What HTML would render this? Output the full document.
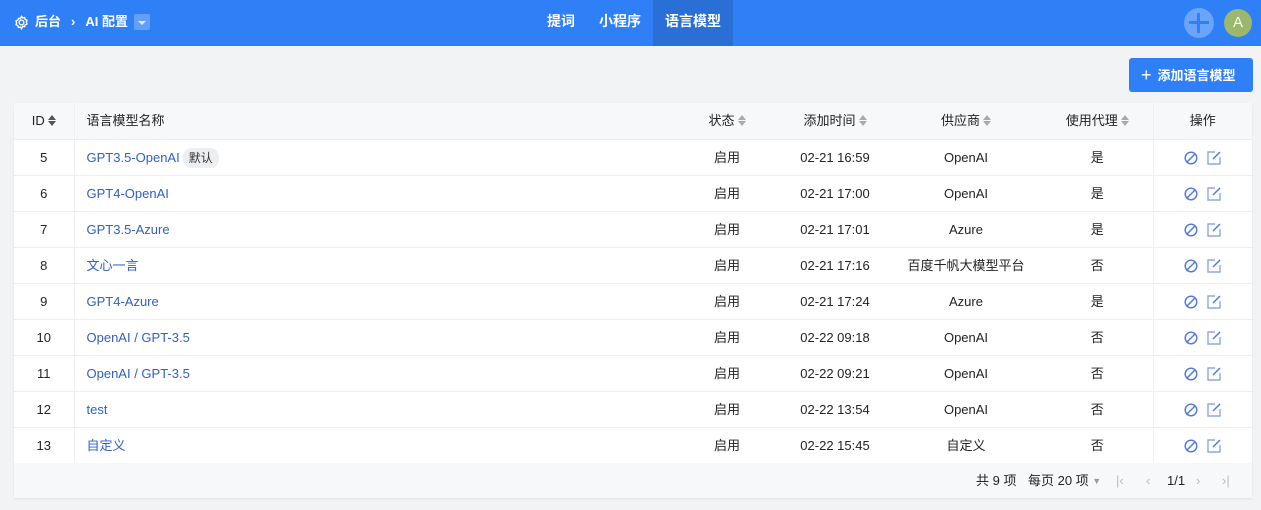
<!DOCTYPE html>
<html><head><meta charset="utf-8"><style>
*{box-sizing:border-box;margin:0;padding:0}
body{width:1261px;height:510px;background:#f2f3f5;font-family:"Liberation Sans","Noto Sans CJK SC",sans-serif;font-size:13px;color:#222;position:relative;overflow:hidden}
.top{position:absolute;left:0;top:0;width:1261px;height:46px;background:#2f7ff7;color:#fff}
.crumb{position:absolute;left:14px;top:13px;font-size:13px;font-weight:bold;display:flex;align-items:center;gap:6px;line-height:18px}
.dd{display:inline-block;width:16px;height:16px;background:rgba(255,255,255,.25);border-radius:2px;position:relative}
.dd:after{content:"";position:absolute;left:4px;top:7px;border:4px solid transparent;border-top:4px solid rgba(255,255,255,.8);border-bottom:0}
.nav{position:absolute;left:535px;top:0;display:flex;height:46px}
.nav div{padding:0 12px;line-height:42px;font-weight:bold;font-size:14px}
.nav .on{background:#2a6fd6;padding:0 12px}
.plus{position:absolute;left:1184px;top:8px;width:30px;height:30px;border-radius:50%;background:#6aa5fb}
.plus:before,.plus:after{content:"";position:absolute;background:#2f7ff7}
.plus:before{left:13px;top:5px;width:3px;height:20px}.plus:after{left:5px;top:13px;width:20px;height:3px}
.av{position:absolute;left:1224px;top:9px;width:28px;height:28px;border-radius:50%;background:#9cb86c;color:#fff;text-align:center;line-height:28px;font-size:15px}
.btn{position:absolute;left:1129px;top:58px;width:124px;height:34px;background:#2f7ff7;border-radius:3px;color:#fff;font-weight:bold;line-height:34px;padding-left:12px;font-size:13px}
.btn b{font-size:18px;font-weight:normal;margin-right:6px;vertical-align:-1px}
.card{position:absolute;left:14px;top:103px;width:1238px;height:395px;background:#fff;box-shadow:0 1px 2px rgba(0,0,0,.08)}
table{border-collapse:collapse;width:1238px;table-layout:fixed}
td,th{height:36px;border-bottom:1px solid #eceef1;font-weight:normal;text-align:center;line-height:18px;padding:1px 0 0;vertical-align:middle}
th{background:#f7f8fa}
.c1{border-right:1px solid #eceef1}.c7{border-left:1px solid #eceef1}
.nm{text-align:left;padding-left:12px;color:#2f5fc8}
th.nm{color:#222}
.s{display:inline-block;width:8px;height:12px;position:relative;vertical-align:-1px;margin-left:3px}
.s:before,.s:after{content:"";position:absolute;left:0;border:4px solid transparent}
.s:before{top:-3px;border-bottom:5px solid #aaa}.s:after{top:7px;border-top:5px solid #aaa}
.id .s:before{border-bottom-color:#555}.id .s:after{border-top-color:#555}
.tag{display:inline-block;background:#eceef1;color:#333;border-radius:9px;padding:0 6px;line-height:20px;margin-left:3px;font-size:12px}
td svg{vertical-align:middle;margin:0 4px}
.foot{position:absolute;left:0;top:360px;width:1238px;height:35px;background:#f7f8fa;font-size:13px}
.foot span{position:absolute;top:9px;line-height:18px;white-space:nowrap}
.foot span span{position:static}
</style></head><body>
<div class="top">
<div class="crumb"><svg width="15" height="15" viewBox="0 0 16 16" fill="none" stroke="#fff" stroke-width="1.5"><circle cx="8" cy="8" r="2.5"/><path d="M8 1.5l1.3 1.6 2-.4.6 2 1.9.9-.6 2 .6 2-1.9.9-.6 2-2-.4L8 14.5l-1.3-1.6-2 .4-.6-2-1.9-.9.6-2-.6-2 1.9-.9.6-2 2 .4z"/></svg>后台 <span style="margin:0 4px">›</span> AI 配置 <span class="dd"></span></div>
<div class="nav"><div>提词</div><div>小程序</div><div class="on">语言模型</div></div>
<div class="plus"></div><div class="av">A</div>
</div>
<div class="btn"><b>+</b>添加语言模型</div>
<div class="card">
<table>
<colgroup><col style="width:60px"><col style="width:600px"><col style="width:106px"><col style="width:110px"><col style="width:152px"><col style="width:111px"><col style="width:99px"></colgroup>
<tr><th class="c1 id">ID<span class="s"></span></th><th class="nm">语言模型名称</th><th>状态<span class="s"></span></th><th>添加时间<span class="s"></span></th><th>供应商<span class="s"></span></th><th>使用代理<span class="s"></span></th><th class="c7">操作</th></tr>
<tr><td class="c1">5</td><td class="nm">GPT3.5-OpenAI<span class="tag">默认</span></td><td>启用</td><td>02-21 16:59</td><td>OpenAI</td><td>是</td><td class="c7"><svg width="14" height="14" viewBox="0 0 14 14" fill="none" stroke="#4a78e0" stroke-width="1.4"><circle cx="7" cy="7" r="5.8"/><path d="M3 11L11 3"/></svg><svg width="16" height="16" viewBox="0 0 16 16" fill="none" stroke="#8aa8ea" stroke-width="1.4"><path d="M9 2H2v12h12V7"/><path d="M7 9l7-7" stroke="#4a78e0"/></svg></td></tr>
<tr><td class="c1">6</td><td class="nm">GPT4-OpenAI</td><td>启用</td><td>02-21 17:00</td><td>OpenAI</td><td>是</td><td class="c7"><svg width="14" height="14" viewBox="0 0 14 14" fill="none" stroke="#4a78e0" stroke-width="1.4"><circle cx="7" cy="7" r="5.8"/><path d="M3 11L11 3"/></svg><svg width="16" height="16" viewBox="0 0 16 16" fill="none" stroke="#8aa8ea" stroke-width="1.4"><path d="M9 2H2v12h12V7"/><path d="M7 9l7-7" stroke="#4a78e0"/></svg></td></tr>
<tr><td class="c1">7</td><td class="nm">GPT3.5-Azure</td><td>启用</td><td>02-21 17:01</td><td>Azure</td><td>是</td><td class="c7"><svg width="14" height="14" viewBox="0 0 14 14" fill="none" stroke="#4a78e0" stroke-width="1.4"><circle cx="7" cy="7" r="5.8"/><path d="M3 11L11 3"/></svg><svg width="16" height="16" viewBox="0 0 16 16" fill="none" stroke="#8aa8ea" stroke-width="1.4"><path d="M9 2H2v12h12V7"/><path d="M7 9l7-7" stroke="#4a78e0"/></svg></td></tr>
<tr><td class="c1">8</td><td class="nm">文心一言</td><td>启用</td><td>02-21 17:16</td><td>百度千帆大模型平台</td><td>否</td><td class="c7"><svg width="14" height="14" viewBox="0 0 14 14" fill="none" stroke="#4a78e0" stroke-width="1.4"><circle cx="7" cy="7" r="5.8"/><path d="M3 11L11 3"/></svg><svg width="16" height="16" viewBox="0 0 16 16" fill="none" stroke="#8aa8ea" stroke-width="1.4"><path d="M9 2H2v12h12V7"/><path d="M7 9l7-7" stroke="#4a78e0"/></svg></td></tr>
<tr><td class="c1">9</td><td class="nm">GPT4-Azure</td><td>启用</td><td>02-21 17:24</td><td>Azure</td><td>是</td><td class="c7"><svg width="14" height="14" viewBox="0 0 14 14" fill="none" stroke="#4a78e0" stroke-width="1.4"><circle cx="7" cy="7" r="5.8"/><path d="M3 11L11 3"/></svg><svg width="16" height="16" viewBox="0 0 16 16" fill="none" stroke="#8aa8ea" stroke-width="1.4"><path d="M9 2H2v12h12V7"/><path d="M7 9l7-7" stroke="#4a78e0"/></svg></td></tr>
<tr><td class="c1">10</td><td class="nm">OpenAI / GPT-3.5</td><td>启用</td><td>02-22 09:18</td><td>OpenAI</td><td>否</td><td class="c7"><svg width="14" height="14" viewBox="0 0 14 14" fill="none" stroke="#4a78e0" stroke-width="1.4"><circle cx="7" cy="7" r="5.8"/><path d="M3 11L11 3"/></svg><svg width="16" height="16" viewBox="0 0 16 16" fill="none" stroke="#8aa8ea" stroke-width="1.4"><path d="M9 2H2v12h12V7"/><path d="M7 9l7-7" stroke="#4a78e0"/></svg></td></tr>
<tr><td class="c1">11</td><td class="nm">OpenAI / GPT-3.5</td><td>启用</td><td>02-22 09:21</td><td>OpenAI</td><td>否</td><td class="c7"><svg width="14" height="14" viewBox="0 0 14 14" fill="none" stroke="#4a78e0" stroke-width="1.4"><circle cx="7" cy="7" r="5.8"/><path d="M3 11L11 3"/></svg><svg width="16" height="16" viewBox="0 0 16 16" fill="none" stroke="#8aa8ea" stroke-width="1.4"><path d="M9 2H2v12h12V7"/><path d="M7 9l7-7" stroke="#4a78e0"/></svg></td></tr>
<tr><td class="c1">12</td><td class="nm">test</td><td>启用</td><td>02-22 13:54</td><td>OpenAI</td><td>否</td><td class="c7"><svg width="14" height="14" viewBox="0 0 14 14" fill="none" stroke="#4a78e0" stroke-width="1.4"><circle cx="7" cy="7" r="5.8"/><path d="M3 11L11 3"/></svg><svg width="16" height="16" viewBox="0 0 16 16" fill="none" stroke="#8aa8ea" stroke-width="1.4"><path d="M9 2H2v12h12V7"/><path d="M7 9l7-7" stroke="#4a78e0"/></svg></td></tr>
<tr><td class="c1">13</td><td class="nm">自定义</td><td>启用</td><td>02-22 15:45</td><td>自定义</td><td>否</td><td class="c7"><svg width="14" height="14" viewBox="0 0 14 14" fill="none" stroke="#4a78e0" stroke-width="1.4"><circle cx="7" cy="7" r="5.8"/><path d="M3 11L11 3"/></svg><svg width="16" height="16" viewBox="0 0 16 16" fill="none" stroke="#8aa8ea" stroke-width="1.4"><path d="M9 2H2v12h12V7"/><path d="M7 9l7-7" stroke="#4a78e0"/></svg></td></tr>
</table>
<div class="foot"><span style="left:962px">共 9 项</span><span style="left:1014px">每页 20 项 <span style="color:#999;font-size:9px;vertical-align:1px">▼</span></span><span style="left:1102px;color:#bbb">|‹</span><span style="left:1132px;color:#bbb">‹</span><span style="left:1153px">1/1</span><span style="left:1182px;color:#bbb">›</span><span style="left:1208px;color:#bbb">›|</span></div>
</div>
</body></html>
